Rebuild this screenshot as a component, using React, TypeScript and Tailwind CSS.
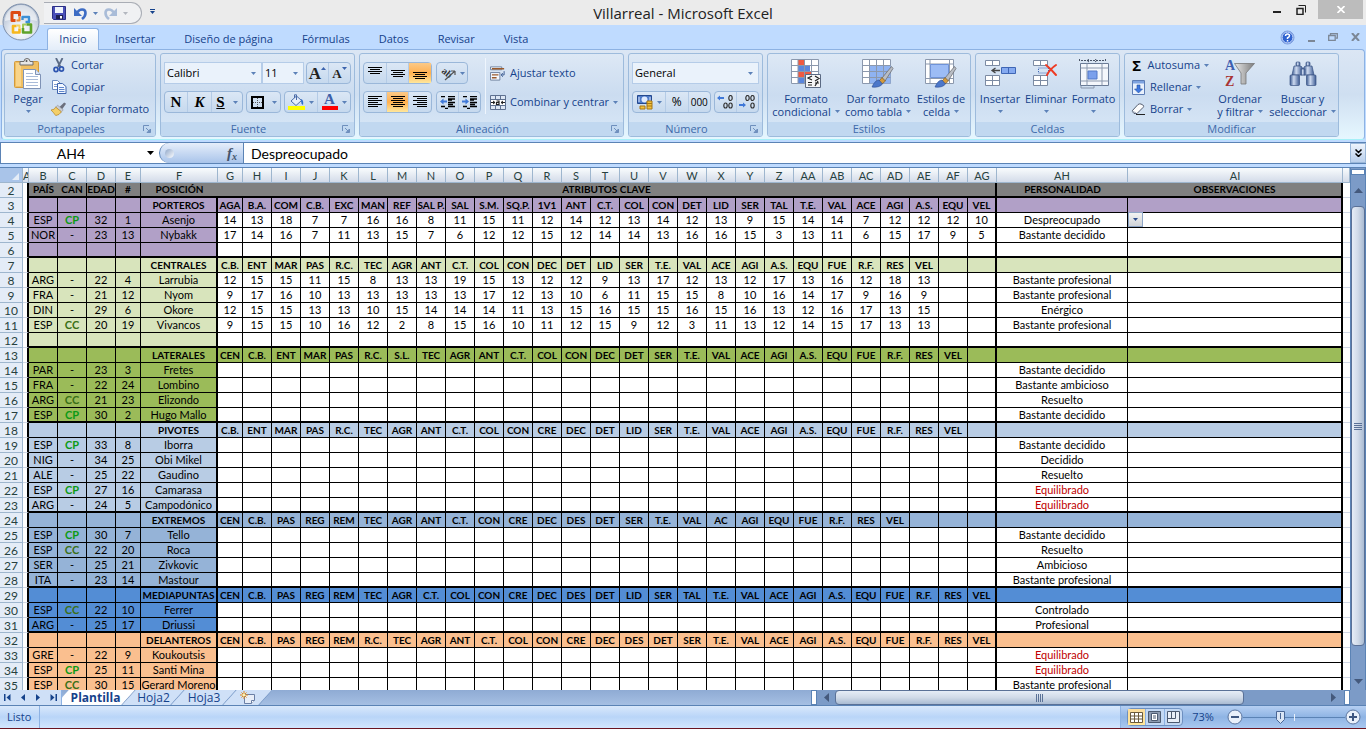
import type { ReactNode } from "react";

type Player = {
  country: string;
  can: string;
  age: number;
  num: number;
  name: string;
  stats?: string;
  personality?: string;
};

type Section = {
  title: string;
  color: string;
  attrs: string;
  players: Player[];
  spacer?: boolean;
};

const sections: Section[] = [
  {
    title: "PORTEROS",
    color: "bg-[#b1a0c7]",
    attrs: "AGA,B.A.,COM,C.B.,EXC,MAN,REF,SAL P.,SAL,S.M.,SQ.P.,1V1,ANT,C.T.,COL,CON,DET,LID,SER,TAL,T.E.,VAL,ACE,AGI,A.S.,EQU,VEL",
    spacer: true,
    players: [
      { country: "ESP", can: "CP", age: 32, num: 1, name: "Asenjo", personality: "Despreocupado", stats: "14,13,18,7,7,16,16,8,11,15,11,12,14,12,13,14,12,13,9,15,14,14,7,12,12,12,10" },
      { country: "NOR", can: "-", age: 23, num: 13, name: "Nybakk", personality: "Bastante decidido", stats: "17,14,16,7,11,13,15,7,6,12,12,15,12,14,14,13,16,16,15,3,13,11,6,15,17,9,5" },
    ],
  },
  {
    title: "CENTRALES",
    color: "bg-[#d8e4bc]",
    attrs: "C.B.,ENT,MAR,PAS,R.C.,TEC,AGR,ANT,C.T.,COL,CON,DEC,DET,LID,SER,T.E.,VAL,ACE,AGI,A.S.,EQU,FUE,R.F.,RES,VEL",
    spacer: true,
    players: [
      { country: "ARG", can: "-", age: 22, num: 4, name: "Larrubia", personality: "Bastante profesional", stats: "12,15,15,11,15,8,13,13,19,15,13,12,12,9,13,17,12,13,12,17,13,16,12,18,13" },
      { country: "FRA", can: "-", age: 21, num: 12, name: "Nyom", personality: "Bastante profesional", stats: "9,17,16,10,13,13,13,13,13,17,12,13,10,6,11,15,15,8,10,16,14,17,9,16,9" },
      { country: "DIN", can: "-", age: 29, num: 6, name: "Okore", personality: "Enérgico", stats: "12,15,15,13,13,10,15,14,14,14,11,13,15,16,15,15,16,15,16,13,12,16,17,13,15" },
      { country: "ESP", can: "CC", age: 20, num: 19, name: "Vivancos", personality: "Bastante profesional", stats: "9,15,15,10,16,12,2,8,15,16,10,11,12,15,9,12,3,11,13,12,14,15,17,13,13" },
    ],
  },
  {
    title: "LATERALES",
    color: "bg-[#9bbb59]",
    attrs: "CEN,C.B.,ENT,MAR,PAS,R.C.,S.L.,TEC,AGR,ANT,C.T.,COL,CON,DEC,DET,SER,T.E.,VAL,ACE,AGI,A.S.,EQU,FUE,R.F.,RES,VEL",
    players: [
      { country: "PAR", can: "-", age: 23, num: 3, name: "Fretes", personality: "Bastante decidido" },
      { country: "FRA", can: "-", age: 22, num: 24, name: "Lombino", personality: "Bastante ambicioso" },
      { country: "ARG", can: "CC", age: 21, num: 23, name: "Elizondo", personality: "Resuelto" },
      { country: "ESP", can: "CP", age: 30, num: 2, name: "Hugo Mallo", personality: "Bastante decidido" },
    ],
  },
  {
    title: "PIVOTES",
    color: "bg-[#b8cce4]",
    attrs: "C.B.,ENT,MAR,PAS,R.C.,TEC,AGR,ANT,C.T.,COL,CON,CRE,DEC,DET,LID,SER,T.E.,VAL,ACE,AGI,A.S.,EQU,FUE,R.F.,RES,VEL",
    players: [
      { country: "ESP", can: "CP", age: 33, num: 8, name: "Iborra", personality: "Bastante decidido" },
      { country: "NIG", can: "-", age: 34, num: 25, name: "Obi Mikel", personality: "Decidido" },
      { country: "ALE", can: "-", age: 25, num: 22, name: "Gaudino", personality: "Resuelto" },
      { country: "ESP", can: "CP", age: 27, num: 16, name: "Camarasa", personality: "Equilibrado" },
      { country: "ARG", can: "-", age: 24, num: 5, name: "Campodónico", personality: "Equilibrado" },
    ],
  },
  {
    title: "EXTREMOS",
    color: "bg-[#95b3d7]",
    attrs: "CEN,C.B.,PAS,REG,REM,TEC,AGR,ANT,C.T.,CON,CRE,DEC,DES,DET,SER,T.E.,VAL,AC,AGI,EQU,FUE,R.F.,RES,VEL",
    players: [
      { country: "ESP", can: "CP", age: 30, num: 7, name: "Tello", personality: "Bastante decidido" },
      { country: "ESP", can: "CC", age: 22, num: 20, name: "Roca", personality: "Resuelto" },
      { country: "SER", can: "-", age: 25, num: 21, name: "Zivkovic", personality: "Ambicioso" },
      { country: "ITA", can: "-", age: 23, num: 14, name: "Mastour", personality: "Bastante profesional" },
    ],
  },
  {
    title: "MEDIAPUNTAS",
    color: "bg-[#538dd5]",
    attrs: "CEN,C.B.,PAS,REG,REM,TEC,AGR,C.T.,COL,CON,CRE,DEC,DES,DET,LID,SER,TAL,T.E.,VAL,ACE,AGI,A.S.,EQU,FUE,R.F.,RES,VEL",
    players: [
      { country: "ESP", can: "CC", age: 22, num: 10, name: "Ferrer", personality: "Controlado" },
      { country: "ARG", can: "-", age: 25, num: 17, name: "Driussi", personality: "Profesional" },
    ],
  },
  {
    title: "DELANTEROS",
    color: "bg-[#fabf8f]",
    attrs: "CEN,C.B.,PAS,REG,REM,R.C.,TEC,AGR,ANT,C.T.,COL,CON,CRE,DEC,DES,DET,SER,T.E.,VAL,ACE,AGI,A.S.,EQU,FUE,R.F.,RES,VEL",
    players: [
      { country: "GRE", can: "-", age: 22, num: 9, name: "Koukoutsis", personality: "Equilibrado" },
      { country: "ESP", can: "CP", age: 25, num: 11, name: "Santi Mina", personality: "Equilibrado" },
      { country: "ESP", can: "CC", age: 30, num: 15, name: "Gerard Moreno", personality: "Bastante profesional" },
    ],
  },
];

type Row = {
  color: string;
  kind: "head" | "player" | "spacer";
  last: boolean;
  section?: Section;
  player?: Player;
};

const rows: Row[] = sections.flatMap((section) => {
  const { color } = section;
  const list: Row[] = [
    { color, kind: "head", last: false, section },
    ...section.players.map((player) => ({ color, kind: "player" as const, last: false, player })),
  ];
  if (section.spacer) list.push({ color, kind: "spacer", last: false });
  if (section.title !== "DELANTEROS") list[list.length - 1].last = true;
  return list;
});

const columns = "A B C D E F G H I J K L M N O P Q R S T U V W X Y Z AA AB AC AD AE AF AG AH AI".split(" ");
const ATTR_COUNT = 27;

const canColor: Record<string, string> = {
  CP: "font-bold text-[#0c9a14]",
  CC: "font-bold text-[#3a6f16]",
};

/* ---------- icons ---------- */

const Caret = ({ className = "text-[#5c81b8]" }: { className?: string }) => (
  <svg width="5" height="3" viewBox="0 0 5 3" className={`shrink-0 ${className}`} aria-hidden="true">
    <path d="M0 0h5L2.500 3z" fill="currentColor" />
  </svg>
);

const OfficeLogo = () => (
  <svg width="38" height="38" viewBox="0 0 38 38" aria-hidden="true">
    <defs>
      <radialGradient id="orb" cx="50%" cy="75%" r="70%">
        <stop offset="0" stopColor="#ffffff" />
        <stop offset="0.5" stopColor="#dfe5ee" />
        <stop offset="1" stopColor="#a9b7cc" />
      </radialGradient>
    </defs>
    <circle cx="19" cy="19" r="18" fill="url(#orb)" stroke="#7d8fab" />
    <path d="M3 18a16 16 0 0 1 32 0q-16-5-32 0z" fill="#fff" opacity="0.55" />
    <g fill="none" strokeLinejoin="round">
      <path d="M17.500 13.500V9.500h-7.500v8h3.500" stroke="#dd4a14" strokeWidth="3" />
      <path d="M14.500 17.500h3V14" stroke="#f08a2c" strokeWidth="2" />
      <path d="M20.500 17v-3h6.500v5h-3.500" stroke="#3c8fd6" strokeWidth="2.400" />
      <path d="M17.500 25.500v4H11v-6.500h3.500" stroke="#f6b71c" strokeWidth="2.600" />
      <path d="M14.500 22.500h3v3" stroke="#f3d05c" strokeWidth="2" />
      <path d="M21 25v4.500h8v-8h-4.500" stroke="#5fa32a" strokeWidth="2.600" />
      <path d="M21 25v-3.500h3.500" stroke="#a5cc5a" strokeWidth="2" />
    </g>
  </svg>
);

const SaveIcon = () => (
  <svg width="14" height="14" viewBox="0 0 14 14" aria-hidden="true">
    <path d="M.5.5h13v13h-12l-1-1z" fill="#4a4fb8" stroke="#2b2f86" />
    <path d="M3 1h8v6H3z" fill="#eef3fb" />
    <path d="M4 9h7v4H4z" fill="#1e2050" />
    <path d="M8 10h2v2.500H8z" fill="#fff" />
  </svg>
);

const UndoIcon = ({ flip = false }: { flip?: boolean }) => (
  <svg width="13" height="13" viewBox="0 0 13 13" className={flip ? "-scale-x-100" : ""} aria-hidden="true">
    <path d="M3.500 5.500c2-4 8-4 8 .5 0 3-1.500 4.500-3.500 6" fill="none" stroke={flip ? "#a9bcd8" : "#3d6cc4"} strokeWidth="2.600" />
    <path d="M0 1v8h8z" fill={flip ? "#a9bcd8" : "#3d6cc4"} />
  </svg>
);

const PasteIcon = () => (
  <svg width="28" height="31" viewBox="0 0 28 31" aria-hidden="true">
    <rect x=".5" y="3.500" width="24" height="26" rx="1" fill="#f0bf62" stroke="#d29a3c" />
    <path d="M2 5h5v23H2z" fill="#f8d48a" />
    <path d="M6 3.500h4q0-3 3-3t3 3h3V7H6z" fill="#e6e6e6" stroke="#6c6c6c" />
    <circle cx="12.500" cy="3" r="1" fill="#555" />
    <path d="M9.500 11.500h12l5 5v14h-17z" fill="#fff" stroke="#7f93b6" />
    <path d="M21.500 11.500v5h5" fill="#dbe5f4" stroke="#7f93b6" />
    <path d="M12 15.500h7M12 18.500h12M12 21.500h12M12 24.500h12M12 27.500h12" stroke="#a9bbd8" />
  </svg>
);

const CutIcon = () => (
  <svg width="15" height="15" viewBox="0 0 15 15" aria-hidden="true">
    <path d="M4 0l4.500 9M10.500 0L6 9" stroke="#5b6b86" strokeWidth="1.800" />
    <ellipse cx="4" cy="11.500" rx="2" ry="2.200" fill="none" stroke="#2f56b0" strokeWidth="1.700" />
    <ellipse cx="9.500" cy="11" rx="2" ry="2.200" fill="none" stroke="#2f56b0" strokeWidth="1.700" />
  </svg>
);

const CopyIcon = () => (
  <svg width="16" height="14" viewBox="0 0 16 14" aria-hidden="true">
    <path d="M1.500.5h5l3 3v6h-8z" fill="#fff" stroke="#6b8ac0" />
    <path d="M3 4.500h4M3 6.500h4" stroke="#7e9ace" />
    <path d="M6.500 3.500h5l3.500 3v7H6.500z" fill="#f3f8ff" stroke="#3d64ae" />
    <path d="M8 7.500h5M8 9.500h5.500M8 11.500h5.500" stroke="#5f86cc" />
  </svg>
);

const BrushIcon = () => (
  <svg width="17" height="14" viewBox="0 0 17 14" aria-hidden="true">
    <path d="M9 5l5-5 2 1.500L12 7z" fill="#6b6f7c" />
    <path d="M7 3l6 5-2 2-6-5z" fill="#c9ccd3" stroke="#8a8c94" strokeWidth=".6" />
    <path d="M5 5l6 5q-2 3.500-6 4Q3 11 0 8q4 0 5-3z" fill="#f4cf68" stroke="#b98a2a" strokeWidth=".8" />
  </svg>
);

const BordersIcon = () => (
  <svg width="13" height="13" viewBox="0 0 13 13" aria-hidden="true">
    <rect x="1" y="1" width="11" height="11" fill="none" stroke="#000" strokeWidth="2" />
    <path d="M6.500 2v9M2 6.500h9" stroke="#555" strokeDasharray="1 1" />
  </svg>
);

const FillIcon = () => (
  <svg width="17" height="16" viewBox="0 0 17 16" aria-hidden="true">
    <path d="M3 7l5.500-5 5 4.500L8 11.500z" fill="#e6eefb" stroke="#4b6ca8" />
    <path d="M8.500 6V.8H6.500V4" fill="none" stroke="#4b6ca8" />
    <path d="M13 5q3 1 2 6-2-1-2-4z" fill="#2f6fd0" />
    <path d="M0 12h17v4H0z" fill="#ffff00" />
  </svg>
);

const FontColorIcon = () => (
  <span className="flex w-4 flex-col items-center">
    <span className="font-['Liberation_Serif',serif] text-[15px] leading-[11px] font-bold text-[#3c5fa8]">A</span>
    <span className="mt-px h-1 w-4 bg-[#ff0000]" />
  </span>
);

type LinesProps = { rows: [number, number, number][]; height?: number };

const LinesIcon = ({ rows: lines, height = 12 }: LinesProps) => (
  <svg width="16" height={height} viewBox={`0 0 16 ${height}`} shapeRendering="crispEdges" aria-hidden="true">
    {lines.map(([x, y, w]) => (
      <rect key={y} x={x} y={y} width={w} height="1" fill="#000" />
    ))}
  </svg>
);

const IndentIcon = ({ flip = false }: { flip?: boolean }) => (
  <svg width="16" height="13" viewBox="0 0 16 13" aria-hidden="true">
    <path d="M1 .5h4M8 .5h7M8 3h7M8 4h4M8 6.500h7M8 8.500h5M1 10.500h4M8 10.500h7M5 12.500h3" stroke="#000" strokeWidth="1.300" />
    <path d={flip ? "M7 5.500L3.500 2.500v2H0v2h3.500v2z" : "M0 5.500l3.500-3v2H7v2H3.500v2z"} fill="#3f78d8" />
  </svg>
);

const OrientationIcon = () => (
  <svg width="16" height="16" viewBox="0 0 16 16" className="overflow-visible" aria-hidden="true">
    <text x="1" y="7" transform="rotate(40 1 7)" fontFamily="Liberation Serif, serif" fontSize="10" fontWeight="bold" fill="#333">
      ab
    </text>
    <path d="M5 15L15 6M15 6h-4M15 6v4" fill="none" stroke="#555" strokeWidth="1.200" />
  </svg>
);

const WrapIcon = () => (
  <svg width="17" height="15" viewBox="0 0 17 15" aria-hidden="true">
    <path d="M.5.500h12v3H.5z" fill="#fff" stroke="#6d7f9c" />
    <path d="M2 2.500h13" stroke="#9a5a2c" strokeWidth="1.500" />
    <path d="M.5 6.500h10v8H.5z" fill="#f5f9ff" stroke="#6d7f9c" />
    <path d="M2 9h7M2 12h5" stroke="#9a5a2c" strokeWidth="1.500" />
    <path d="M15 5v4h-3M13.500 7L12 9l1.500 2" fill="none" stroke="#39598f" />
  </svg>
);

const MergeIcon = () => (
  <svg width="16" height="15" viewBox="0 0 16 15" aria-hidden="true">
    <path d="M.5.500h15v14H.5z" fill="#dde7f5" stroke="#5e7191" />
    <path d="M5.500.500v4M10.500.500v4M5.500 10.500v4M10.500 10.500v4M.5 4.500h15M.5 10.500h15" stroke="#5e7191" />
    <path d="M1 5h14v5H1z" fill="#fff" />
    <path d="M1 7.500h4M15 7.500h-4M3 6l2 1.500L3 9M13 6l-2 1.500 2 1.500" fill="none" stroke="#222" />
    <path d="M6.500 6h2.500v3.500H6.500V7.500H9" fill="none" stroke="#222" strokeWidth="1.200" />
  </svg>
);

const CurrencyIcon = () => (
  <svg width="16" height="15" viewBox="0 0 16 15" aria-hidden="true">
    <path d="M.5.500h14v8H.5z" fill="#4f7bc8" stroke="#24488e" />
    <ellipse cx="7.500" cy="4.500" rx="3" ry="3" fill="#dfeaff" />
    <path d="M2 2v5M13 2v5" stroke="#dfeaff" />
    <path d="M10 6h5v8h-5z" fill="#f2c23c" stroke="#a87712" />
    <path d="M10 8.500h5M10 11h5" stroke="#a87712" />
    <path d="M3 11h5v3H3z" fill="#f2c23c" stroke="#a87712" />
  </svg>
);

const DecimalIcon = ({ less = false }: { less?: boolean }) => (
  <svg width="17" height="14" viewBox="0 0 17 14" aria-hidden="true">
    <path d={less ? "M7 10L4 7.500v1.500H0v2h4v1.500z" : "M0 3l3-2.500V2h4v2H3v1.500z"} fill="#3f78d8" />
    <g fill="none" stroke="#333" strokeWidth="1.200">
      <ellipse cx="13.500" cy="3" rx="1.700" ry="2.500" />
      {less ? <ellipse cx="8.500" cy="3" rx="1.700" ry="2.500" /> : <ellipse cx="8.500" cy="10.500" rx="1.700" ry="2.500" />}
      <ellipse cx="13.500" cy="10.500" rx="1.700" ry="2.500" />
    </g>
  </svg>
);

const CondFormatIcon = () => (
  <svg width="31" height="30" viewBox="0 0 31 30" aria-hidden="true">
    <path d="M.5.500h27v24H.5z" fill="#fff" stroke="#8b98ad" />
    <path d="M7 1h6v5H7zM7 13h13v5H7z" fill="#ef5a41" />
    <path d="M7 7h12v5H7zM7 19h6v5H7z" fill="#5a86dd" />
    <path d="M7 .5v24M13.500.500v24M20.500.500v24M.5 6.500h27M.5 12.500h27M.5 18.500h27" stroke="#8b98ad" />
    <path d="M14.500 15.500h15v13h-15z" fill="#f6f6f6" stroke="#5b6a83" />
    <path d="M21 17l-4 2 4 2M17 23.500h4M17 26h4M24 17l4 2.500-4 2.500M24 24h4M27 22l-3 5" fill="none" stroke="#222" strokeWidth="1.200" />
  </svg>
);

const PaintBrush = () => (
  <g>
    <path d="M29.500 7.500L20 19l3 3 8-12.500z" fill="#b9bdc4" stroke="#6c6f76" strokeWidth=".8" />
    <path d="M20 18.500l-3 3.500 3 3 3.500-3z" fill="#d49a3c" stroke="#6b5022" strokeWidth=".6" />
    <path d="M17 21q-4 0-7 7 7 1 10.500-3z" fill="#4c77c9" stroke="#2c4e93" strokeWidth=".6" />
  </g>
);

const TableFormatIcon = () => (
  <svg width="32" height="30" viewBox="0 0 32 30" aria-hidden="true">
    <path d="M.5.500h28v24H.5z" fill="#fff" stroke="#8b98ad" />
    <path d="M7.500 6.500h21v18h-21z" fill="#8fb3f2" />
    <path d="M7.500.500v24M14.500.500v24M21.500.500v24M.5 6.500h28M.5 12.500h28M.5 18.500h28" stroke="#8b98ad" />
    <PaintBrush />
  </svg>
);

const CellStyleIcon = () => (
  <svg width="32" height="30" viewBox="0 0 32 30" aria-hidden="true">
    <path d="M.5.500h28v24H.5z" fill="#fff" stroke="#8b98ad" />
    <path d="M5 .500v24M24.500.500v24M.5 5h28M.5 19.500h28" stroke="#8b98ad" />
    <path d="M5.500 5.500h18v13h-18z" fill="#9cbcf5" stroke="#6f93d8" />
    <PaintBrush />
  </svg>
);

const InsertCellsIcon = () => (
  <svg width="31" height="29" viewBox="0 0 31 29" aria-hidden="true">
    <path d="M.5 1.500h14v5H.5zM.5 16.500h14v10H.5z" fill="#fff" stroke="#7c8ba3" />
    <path d="M7.500 1.500v5M7.500 16.500v10M.5 21.500h14" stroke="#7c8ba3" />
    <path d="M16.500 8.500h14v6h-14z" fill="#85aaf0" stroke="#3f66b5" />
    <path d="M23.500 8.500v6" stroke="#3f66b5" />
    <path d="M15 11.500H8M10.500 9L7 11.500l3.500 2.500" fill="none" stroke="#444" strokeWidth="1.300" />
  </svg>
);

const DeleteCellsIcon = () => (
  <svg width="26" height="29" viewBox="0 0 26 29" aria-hidden="true">
    <path d="M.5 1.500h14v5H.5zM.5 16.500h14v10H.5z" fill="#fff" stroke="#7c8ba3" />
    <path d="M7.500 1.500v5M7.500 16.500v10M.5 21.500h14" stroke="#7c8ba3" />
    <path d="M5.500 9h10v5h-10z" fill="none" stroke="#3f66b5" strokeDasharray="1 1" />
    <path d="M13 6q5 4 10 10M23 6q-6 4-9 10" fill="none" stroke="#ee3b24" strokeWidth="2" strokeLinecap="round" />
  </svg>
);

const FormatCellsIcon = () => (
  <svg width="32" height="30" viewBox="0 0 32 30" aria-hidden="true">
    <path d="M1.500 0v3M27.500 0v3M3 1.500h23M11 0L9 1.500 11 3M17 0l2 1.500L17 3" fill="none" stroke="#4a5568" strokeDasharray="2 1" />
    <path d="M2.500 4.500h28v22h-28z" fill="#f4f7fc" stroke="#6a7b96" />
    <path d="M9 4.500v22M24 4.500v22M2.500 9h28M2.500 22h28" stroke="#8b98ad" />
    <path d="M10 12h9v8h-9z" fill="#7ba0ec" stroke="#5379c8" />
    <path d="M3 27v2h13v-2" fill="none" stroke="#8b98ad" />
  </svg>
);

const FillDownIcon = () => (
  <svg width="13" height="15" viewBox="0 0 13 15" aria-hidden="true">
    <path d="M.5.500h12v14H.5z" fill="#e9f1fd" stroke="#5d7db5" />
    <path d="M1 1h11v2.500H1z" fill="#7ea3e0" />
    <path d="M5 5h3v4h2.500l-4 4-4-4H5z" fill="#3f78e0" stroke="#22509f" strokeWidth=".6" />
  </svg>
);

const EraserIcon = () => (
  <svg width="14" height="12" viewBox="0 0 14 12" aria-hidden="true">
    <path d="M1 8l6-6.500Q8.500.5 10 1l2.500 1.500q.5 1-.5 2L6 10.500H3z" fill="#fdfdfd" stroke="#555e70" />
    <path d="M1 8l4 2" stroke="#9aa5b8" />
    <path d="M5 11.500h9" stroke="#222" />
  </svg>
);

const SortFilterIcon = () => (
  <span className="relative flex h-[31px] w-[30px] flex-col items-start font-['Liberation_Serif',serif] text-[14px] leading-[16px] font-bold" aria-hidden="true">
    <span className="text-[#3f60b0]">A</span>
    <span className="text-[#a83434]">Z</span>
    <svg width="21" height="22" viewBox="0 0 21 22" className="absolute top-[5px] right-0">
      <defs>
        <linearGradient id="funnel" x1="0" x2="1">
          <stop offset="0" stopColor="#e8e8e8" />
          <stop offset="1" stopColor="#7b7b7b" />
        </linearGradient>
      </defs>
      <path d="M.5.500h20L12 10v11H7V10z" fill="url(#funnel)" stroke="#777" strokeWidth=".8" />
    </svg>
  </span>
);

const BinocularsIcon = () => (
  <svg width="28" height="26" viewBox="0 0 28 26" aria-hidden="true">
    <defs>
      <linearGradient id="barrel" x1="0" x2="1">
        <stop offset="0" stopColor="#39588f" />
        <stop offset="0.4" stopColor="#cddaf0" />
        <stop offset="1" stopColor="#3c5a92" />
      </linearGradient>
    </defs>
    <g fill="url(#barrel)" stroke="#3a5384" strokeWidth=".7">
      <rect x="7" y="1" width="4" height="4" rx="1" />
      <rect x="17" y="1" width="4" height="4" rx="1" />
      <path d="M5 5h7l1.500 2v7H3z" />
      <path d="M16 5h7l2 9H14.500V7z" />
      <rect x="12" y="8" width="4" height="6" />
      <rect x="1" y="14" width="9.500" height="10.500" rx="1" />
      <rect x="17.500" y="14" width="9.500" height="10.500" rx="1" />
    </g>
  </svg>
);

const NewSheetIcon = () => (
  <svg width="16" height="13" viewBox="0 0 16 13" aria-hidden="true">
    <path d="M4.500 3.500h10v6l-3 3h-7z" fill="#e8eef8" stroke="#6a7fa5" />
    <path d="M11.500 12.500v-3h3" fill="#fff" stroke="#6a7fa5" />
    <path d="M4 0v8M0 4h8M1.500 1.500l5 5M6.500 1.500l-5 5" stroke="#e08a1c" />
    <circle cx="4" cy="4" r="1.300" fill="#fff6b0" />
  </svg>
);

/* ---------- ribbon ---------- */

type GroupProps = { label: string; width: string; launcher?: boolean; children: ReactNode };

const Group = ({ label, width, launcher, children }: GroupProps) => (
  <section
    aria-label={label}
    className={`flex h-[84px] shrink-0 flex-col overflow-hidden rounded-[3px] border border-[#9dbbdc] bg-linear-to-b from-[#dde8f5] via-[#cbdcf0] to-[#d9e8f7] ${width}`}
  >
    <div className="flex flex-1">{children}</div>
    <div className="flex h-[14px] items-center justify-center bg-[#c1d8f0] text-[#3e6aaa]">
      <span className={launcher ? "flex-1 pr-[6px] text-center" : ""}>{label}</span>
      {launcher && (
        <button aria-label={`Opciones de ${label}`} className="mr-1">
          <svg width="8" height="8" viewBox="0 0 8 8" aria-hidden="true">
            <path d="M.5 6V.500H6" fill="none" stroke="#6e8fbd" />
            <path d="M3 3l3 3M7.500 4v3.500H4z" stroke="#6e8fbd" fill="#6e8fbd" />
          </svg>
        </button>
      )}
    </div>
  </section>
);

const ButtonBox = ({ children, className = "" }: { children: ReactNode; className?: string }) => (
  <div className={`flex h-[22px] items-stretch divide-x divide-[#b4cbe6] rounded-sm border border-[#9ab7d9] bg-linear-to-b from-[#dbe7f5] to-[#c6d9ee] ${className}`}>
    {children}
  </div>
);

type BoxButtonProps = { label: string; active?: boolean; className?: string; children: ReactNode };

const BoxButton = ({ label, active, className = "flex-1", children }: BoxButtonProps) => (
  <button
    aria-label={label}
    className={`flex items-center justify-center gap-1 ${active ? "bg-linear-to-b from-[#fbc987] via-[#ffb04e] to-[#ffe79b]" : ""} ${className}`}
  >
    {children}
  </button>
);

type SmallButtonProps = { icon: ReactNode; label: string; caret?: boolean };

const SmallButton = ({ icon, label, caret }: SmallButtonProps) => (
  <button className="flex h-[22px] items-center gap-1">
    <span className="flex w-4 justify-center">{icon}</span>
    <span>{label}</span>
    {caret && <Caret />}
  </button>
);

type LargeButtonProps = { icon: ReactNode; lines: string[]; className?: string };

const LargeButton = ({ icon, lines, className = "" }: LargeButtonProps) => (
  <button className={`flex flex-col items-center pt-1 leading-[13px] whitespace-nowrap ${className}`}>
    <span className="mb-[3px] flex h-[31px] items-center">{icon}</span>
    <span>{lines[0]}</span>
    <span className="flex h-[13px] items-center gap-1">
      {lines[1]}
      <Caret />
    </span>
  </button>
);

type ComboProps = { label: string; value: string; width: string };

const Combo = ({ label, value, width }: ComboProps) => (
  <label className={`flex h-[22px] items-center border border-[#b5cce8] bg-[#eaf2fb] pr-[5px] ${width}`}>
    <select aria-label={label} defaultValue={value} className="min-w-0 flex-1 appearance-none bg-transparent pl-[2px] text-[11px] text-black outline-none">
      <option>{value}</option>
    </select>
    <Caret />
  </label>
);

const Ribbon = () => (
  <div className="mx-px flex h-[91px] gap-1 rounded-[4px] border border-[#8db2e3] border-b-[#a5f0f8] bg-linear-to-b from-[#dbe6f4] via-[#cfdff1] to-[#e6f7ff] px-[2px] pt-[3px] whitespace-nowrap text-[#15428b]">
    <Group label="Portapapeles" width="w-[152px]" launcher>
      <LargeButton icon={<PasteIcon />} lines={["Pegar"]} className="w-[46px]" />
      <div className="flex flex-col">
        <SmallButton icon={<CutIcon />} label="Cortar" />
        <SmallButton icon={<CopyIcon />} label="Copiar" />
        <SmallButton icon={<BrushIcon />} label="Copiar formato" />
      </div>
    </Group>

    <Group label="Fuente" width="w-[195px]" launcher>
      <div className="flex flex-1 flex-col gap-[7px] px-[3px] pt-2">
        <div className="flex">
          <Combo label="Fuente" value="Calibri" width="w-[98px]" />
          <Combo label="Tamaño" value="11" width="w-[42px]" />
          <ButtonBox className="ml-auto w-[45px]">
            <BoxButton label="Aumentar tamaño">
              <span className="font-['Liberation_Serif',serif] text-[17px] leading-none font-bold text-[#222]">A</span>
              <svg width="5" height="12" viewBox="0 0 5 12" className="-ml-1" aria-hidden="true"><path d="M0 3h5L2.500 0z" fill="#3b63ad" /></svg>
            </BoxButton>
            <BoxButton label="Disminuir tamaño">
              <span className="font-['Liberation_Serif',serif] text-[13px] leading-none font-bold text-[#222]">A</span>
              <svg width="5" height="12" viewBox="0 0 5 12" className="-ml-1" aria-hidden="true"><path d="M0 0h5L2.500 3z" fill="#3b63ad" /></svg>
            </BoxButton>
          </ButtonBox>
        </div>
        <div className="flex justify-between">
          <ButtonBox className="w-[79px] font-['Liberation_Serif',serif] text-[15px] font-bold text-black">
            <BoxButton label="Negrita" className="w-[23px]"><span className="font-black">N</span></BoxButton>
            <BoxButton label="Cursiva" className="w-6"><i>K</i></BoxButton>
            <BoxButton label="Subrayado"><u>S</u><Caret className="ml-1 text-[#5c81b8]" /></BoxButton>
          </ButtonBox>
          <ButtonBox className="w-[35px]">
            <BoxButton label="Bordes"><BordersIcon /><Caret className="ml-1 text-[#5c81b8]" /></BoxButton>
          </ButtonBox>
          <ButtonBox className="w-[67px]">
            <BoxButton label="Color de relleno"><FillIcon /><Caret /></BoxButton>
            <BoxButton label="Color de fuente"><FontColorIcon /><Caret /></BoxButton>
          </ButtonBox>
        </div>
      </div>
    </Group>

    <Group label="Alineación" width="w-[265px]" launcher>
      <div className="flex flex-col gap-[7px] pt-2 pl-[3px]">
        <div className="flex gap-1">
          <ButtonBox className="w-[69px]">
            <BoxButton label="Alinear arriba"><LinesIcon rows={[[1, 0, 14], [3, 2, 10], [1, 4, 14], [3, 6, 10]]} /></BoxButton>
            <BoxButton label="Alinear en el medio"><LinesIcon rows={[[1, 3, 14], [3, 5, 10], [1, 7, 14], [3, 9, 10]]} /></BoxButton>
            <BoxButton label="Alinear abajo" active><LinesIcon rows={[[1, 5, 14], [3, 7, 10], [1, 9, 14], [3, 11, 10]]} /></BoxButton>
          </ButtonBox>
          <ButtonBox className="w-8">
            <BoxButton label="Orientación"><OrientationIcon /><Caret /></BoxButton>
          </ButtonBox>
        </div>
        <div className="flex gap-1">
          <ButtonBox className="w-[69px]">
            <BoxButton label="Alinear a la izquierda"><LinesIcon rows={[[1, 0, 14], [1, 2, 10], [1, 4, 14], [1, 6, 10], [1, 8, 14], [1, 10, 10]]} /></BoxButton>
            <BoxButton label="Centrar" active><LinesIcon rows={[[1, 0, 14], [3, 2, 10], [1, 4, 14], [3, 6, 10], [1, 8, 14], [3, 10, 10]]} /></BoxButton>
            <BoxButton label="Alinear a la derecha"><LinesIcon rows={[[1, 0, 14], [5, 2, 10], [1, 4, 14], [5, 6, 10], [1, 8, 14], [5, 10, 10]]} /></BoxButton>
          </ButtonBox>
          <ButtonBox className="w-[45px]">
            <BoxButton label="Disminuir sangría"><IndentIcon /></BoxButton>
            <BoxButton label="Aumentar sangría"><IndentIcon flip /></BoxButton>
          </ButtonBox>
        </div>
      </div>
      <div className="mx-1 mt-1 mb-2 w-px bg-[#eef5fd]" />
      <div className="flex flex-col gap-[7px] pt-2">
        <SmallButton icon={<WrapIcon />} label="Ajustar texto" />
        <SmallButton icon={<MergeIcon />} label="Combinar y centrar" caret />
      </div>
    </Group>

    <Group label="Número" width="w-[135px]" launcher>
      <div className="flex flex-1 flex-col gap-[7px] px-[3px] pt-2">
        <Combo label="Formato de número" value="General" width="w-full" />
        <div className="flex justify-between">
          <ButtonBox className="w-[79px] text-black">
            <BoxButton label="Formato de moneda" className="w-[33px]"><CurrencyIcon /><Caret /></BoxButton>
            <BoxButton label="Estilo porcentual"><span className="text-[12px]">%</span></BoxButton>
            <BoxButton label="Estilo millares"><span className="text-[10px]">000</span></BoxButton>
          </ButtonBox>
          <ButtonBox className="w-[45px]">
            <BoxButton label="Aumentar decimales"><DecimalIcon /></BoxButton>
            <BoxButton label="Disminuir decimales"><DecimalIcon less /></BoxButton>
          </ButtonBox>
        </div>
      </div>
    </Group>

    <Group label="Estilos" width="w-[204px]">
      <LargeButton icon={<CondFormatIcon />} lines={["Formato", "condicional"]} className="w-[76px]" />
      <LargeButton icon={<TableFormatIcon />} lines={["Dar formato", "como tabla"]} className="w-[68px]" />
      <LargeButton icon={<CellStyleIcon />} lines={["Estilos de", "celda"]} className="flex-1" />
    </Group>

    <Group label="Celdas" width="w-[145px]">
      <LargeButton icon={<InsertCellsIcon />} lines={["Insertar"]} className="w-12" />
      <LargeButton icon={<DeleteCellsIcon />} lines={["Eliminar"]} className="w-11" />
      <LargeButton icon={<FormatCellsIcon />} lines={["Formato"]} className="flex-1" />
    </Group>

    <Group label="Modificar" width="w-[215px]">
      <div className="flex w-[84px] flex-col pl-[5px]">
        <SmallButton icon={<span className="text-[15px] font-bold text-black">Σ</span>} label="Autosuma" caret />
        <SmallButton icon={<FillDownIcon />} label="Rellenar" caret />
        <SmallButton icon={<EraserIcon />} label="Borrar" caret />
      </div>
      <LargeButton icon={<SortFilterIcon />} lines={["Ordenar", "y filtrar"]} className="ml-1 w-[54px]" />
      <LargeButton icon={<BinocularsIcon />} lines={["Buscar y", "seleccionar"]} className="flex-1" />
    </Group>
  </div>
);

/* ---------- window chrome ---------- */

const TitleBar = () => (
  <header className="relative flex h-[25px] shrink-0 items-start bg-[#ebebeb]">
    <div className="mt-[2px] ml-[44px] flex h-[22px] w-[98px] items-center gap-[6px] rounded-r-full border border-l-0 border-[#a9adb5] bg-[#f0f1f3] pl-2">
      <button aria-label="Guardar"><SaveIcon /></button>
      <button aria-label="Deshacer" className="ml-[2px] flex items-center gap-[6px]"><UndoIcon /><Caret /></button>
      <button aria-label="Rehacer" className="flex items-center gap-[6px]"><UndoIcon flip /><Caret className="text-[#b3b7bf]" /></button>
    </div>
    <button aria-label="Personalizar barra de acceso rápido" className="mt-[9px] ml-2 flex flex-col items-center gap-px">
      <span className="h-px w-[5px] bg-[#15428b]" />
      <Caret className="text-[#15428b]" />
    </button>
    <h1 className="pointer-events-none absolute inset-x-0 top-[3px] text-center text-[15px] leading-[20px] text-[#222]">Villarreal - Microsoft Excel</h1>
    <div className="ml-auto flex">
      <button aria-label="Minimizar" className="flex h-[19px] w-5 justify-center pt-[11px]"><span className="h-[2px] w-2 bg-[#222]" /></button>
      <button aria-label="Restaurar" className="flex h-[19px] w-7 items-center justify-center">
        <svg width="10" height="10" viewBox="0 0 10 10" aria-hidden="true">
          <path d="M1 3.500h6v6H1z" fill="none" stroke="#222" strokeWidth="1.500" />
          <path d="M2.500.500h7v7" fill="none" stroke="#222" />
        </svg>
      </button>
      <button aria-label="Cerrar" className="mr-[3px] ml-[3px] flex h-[19px] w-[45px] items-center justify-center bg-[#bcbcbc]">
        <svg width="8" height="7" viewBox="0 0 8 7" aria-hidden="true"><path d="M.5 0l7 7M7.500 0l-7 7" stroke="#fff" strokeWidth="1.700" /></svg>
      </button>
    </div>
  </header>
);

const tabs = ["Insertar", "Diseño de página", "Fórmulas", "Datos", "Revisar", "Vista"];

const RibbonTabs = () => (
  <nav className="flex h-[24px] shrink-0 items-stretch pl-[47px] text-[11px] text-[#15428b]">
    <button className="relative z-10 mt-[3px] -mb-px w-[52px] rounded-t-[3px] border border-b-0 border-[#8db2e3] bg-linear-to-b from-white to-[#e3edf9]">Inicio</button>
    <div className="flex gap-[29px] pt-1 pl-4">
      {tabs.map((tab) => (
        <button key={tab}>{tab}</button>
      ))}
    </div>
    <div className="ml-auto flex items-center gap-[13px] pr-[6px]">
      <button aria-label="Ayuda">
        <svg width="15" height="15" viewBox="0 0 15 15" aria-hidden="true">
          <circle cx="7.500" cy="7.500" r="6.500" fill="#2f62cf" stroke="#7d9ede" />
          <circle cx="7.500" cy="7.500" r="5.500" fill="none" stroke="#dbe8ff" />
          <path d="M5.500 6q0-2 2-2t2 1.800q0 1-2 2.200v1" fill="none" stroke="#fff" strokeWidth="1.500" />
          <path d="M6.800 10h1.500v1.500H6.800z" fill="#fff" />
        </svg>
      </button>
      <button aria-label="Minimizar libro" className="h-3 pt-2"><span className="block h-[2px] w-[7px] bg-[#7c8796]" /></button>
      <button aria-label="Restaurar libro">
        <svg width="10" height="8" viewBox="0 0 10 8" aria-hidden="true">
          <path d="M.7 2.500h6.500v5H.7z M2.500 2V.7h6.800v4.500H8" fill="none" stroke="#7c8796" strokeWidth="1.300" />
        </svg>
      </button>
      <button aria-label="Cerrar libro">
        <svg width="9" height="8" viewBox="0 0 9 8" aria-hidden="true"><path d="M1 0l7 8M8 0L1 8" stroke="#7c8796" strokeWidth="2" /></svg>
      </button>
    </div>
  </nav>
);

const FormulaBar = () => (
  <div className="mt-[2px] flex h-[22px] shrink-0 border-y border-[#5b83b5] bg-white font-['Lato','Open_Sans',sans-serif] text-[14px] text-black">
    <input aria-label="Cuadro de nombres" defaultValue="AH4" className="w-[141px] min-w-0 border-l border-[#5b83b5] text-center outline-none" />
    <button aria-label="Lista de nombres" className="flex w-[18px] items-center justify-center">
      <svg width="7" height="4" viewBox="0 0 7 4" aria-hidden="true"><path d="M0 0h7L3.500 4z" fill="#000" /></svg>
    </button>
    <div className="flex w-[85px] items-center justify-between rounded-l-full border-x border-[#5b83b5] bg-linear-to-b from-[#e6eefa] to-[#a9c4ea] pr-[6px] pl-[5px]">
      <span className="size-[9px] rounded-full bg-linear-to-br from-[#8fa6c8] to-white" />
      <button aria-label="Insertar función" className="font-['Liberation_Serif',serif] text-[15px] leading-none font-bold text-[#44546c] italic">
        f<sub className="text-[10px]">x</sub>
      </button>
    </div>
    <input aria-label="Barra de fórmulas" defaultValue="Despreocupado" className="min-w-0 flex-1 pl-[7px] outline-none" />
    <button aria-label="Expandir barra de fórmulas" className="flex w-4 items-center justify-center border border-[#9ab7d9] bg-linear-to-b from-[#eef4fc] to-[#b9cfec]">
      <svg width="7" height="8" viewBox="0 0 7 8" aria-hidden="true"><path d="M.5.500l3 3 3-3M.5 4.500l3 3 3-3" fill="none" stroke="#000" strokeWidth="1.500" /></svg>
    </button>
  </div>
);

/* ---------- sheet ---------- */

const thin = "border-r border-black";
const thick = "border-r-2 border-black";

const SheetRow = ({ row, index }: { row: Row; index: number }) => {
  const { color, player, section } = row;
  const isHead = row.kind === "head";
  const bottom = row.last ? "border-b-2" : "border-b";
  const stats = (section?.attrs ?? player?.stats ?? "").split(",");
  const fill = isHead ? color : "bg-white";
  return (
    <tr className={isHead ? "text-[10px] leading-[14px] font-bold" : ""}>
      <RowHeader n={index} />
      <td className="border-r-2 border-b border-r-black border-b-[#d0d7e5]" />
      <td className={`${thin} ${bottom} ${color}`}>{player?.country}</td>
      <td className={`${thin} ${bottom} ${color}`}>
        <span className={canColor[player?.can ?? ""]}>{player?.can}</span>
      </td>
      <td className={`${thin} ${bottom} ${color}`}>{player?.age}</td>
      <td className={`${thin} ${bottom} ${color}`}>{player?.num}</td>
      <td className={`${thick} ${bottom} ${color}`}>{player?.name ?? section?.title}</td>
      {Array.from({ length: ATTR_COUNT }, (_, i) => (
        <td key={i} className={`${i === ATTR_COUNT - 1 ? thick : thin} ${bottom} ${fill}`}>
          {stats[i]}
        </td>
      ))}
      <td className={`${thin} ${bottom} ${fill} ${player?.personality === "Equilibrado" ? "text-[#c00000]" : ""}`}>{player?.personality}</td>
      <td className={`relative ${thick} ${bottom} ${fill}`}>
        {player?.name === "Asenjo" && (
          <button aria-label="Lista desplegable" className="absolute -top-px left-0 flex h-[15px] w-[15px] items-center justify-center border border-[#8ea5c6] bg-linear-to-b from-[#f3f3f3] to-[#cfd3d8]">
            <Caret className="text-[#2a4a8c]" />
          </button>
        )}
      </td>
      <td className="border-b border-[#d0d7e5]" />
    </tr>
  );
};

const RowHeader = ({ n }: { n: number }) => (
  <th scope="row" className="border-r border-b border-[#9eb6ce] bg-[#e4ecf7] text-[12px] leading-[13px] font-normal text-[#27413e]">
    {n}
  </th>
);

const Sheet = () => (
  <div className="min-w-0 flex-1 overflow-hidden bg-white">
    <table className="w-full table-fixed border-separate border-spacing-0 text-center font-['Lato','Open_Sans',sans-serif] text-[11px] leading-[13px] whitespace-nowrap text-black [&_td]:h-[15px] [&_td]:p-0 [&_td]:align-top [&_th]:h-[15px] [&_th]:p-0">
      <colgroup>
        <col className="w-[23px]" />
        <col className="w-[6px]" />
        <col className="w-[29px]" />
        <col className="w-[29px]" />
        <col className="w-[29px]" />
        <col className="w-[25px]" />
        <col className="w-[77px]" />
        <col className="w-[25px]" />
        {Array.from({ length: 26 }, (_, i) => (
          <col key={i} className="w-[29px]" />
        ))}
        <col className="w-[131px]" />
        <col />
        <col className="w-[7px]" />
      </colgroup>
      <thead>
        <tr>
          <td className="border-r border-b border-[#9eb6ce] bg-[#a9c4e9]">
            <svg width="7" height="7" viewBox="0 0 7 7" className="mt-[5px] ml-3" aria-hidden="true"><path d="M7 0v7H0z" fill="#e4ecf7" /></svg>
          </td>
          {[...columns, ""].map((name) => (
            <th key={name} scope="col" className="overflow-hidden border-r border-b border-[#9eb6ce] bg-linear-to-b from-[#f9fcfd] to-[#d3dbe9] font-normal text-[#27413e]">
              {name}
            </th>
          ))}
        </tr>
      </thead>
      <tbody>
        <tr className="text-[10px] font-bold [&>td]:bg-[#808080]">
          <RowHeader n={2} />
          <td className="border-r-2 border-r-black bg-white!" />
          <td className="border-b-2 border-black">PAÍS</td>
          <td className={`border-b-2 ${thin}`}>CAN</td>
          <td className={`border-b-2 ${thin}`}>EDAD</td>
          <td className={`border-b-2 ${thin}`}>#</td>
          <td className="border-b-2 border-black">POSICIÓN</td>
          <td colSpan={ATTR_COUNT} className={`border-b-2 ${thick}`}>ATRIBUTOS CLAVE</td>
          <td className="border-b-2 border-black">PERSONALIDAD</td>
          <td className={`border-b-2 ${thick}`}>OBSERVACIONES</td>
          <td className="border-b border-[#d0d7e5] bg-white!" />
        </tr>
        {rows.map((row, i) => (
          <SheetRow key={i} row={row} index={i + 3} />
        ))}
      </tbody>
    </table>
  </div>
);

const VerticalScroll = () => (
  <div className="flex w-4 shrink-0 flex-col items-center border-x border-[#5b83b5] bg-[#7c9bc7]">
    <span className="mt-px h-[6px] w-full border border-[#5b83b5] bg-white" />
    <button aria-label="Subir" className="flex h-[31px] w-full items-center justify-center">
      <svg width="9" height="5" viewBox="0 0 9 5" aria-hidden="true"><path d="M0 5h9L4.500 0z" fill="#44597c" /></svg>
    </button>
    <div className="flex w-full flex-1 flex-col items-center justify-center gap-px rounded-sm border border-[#5a7197] bg-linear-to-r from-[#e6edf7] via-[#d0dae8] to-[#aabbd2]">
      {[0, 1, 2, 3].map((i) => (
        <span key={i} className="h-px w-2 bg-[#5a7197]" />
      ))}
    </div>
    <button aria-label="Bajar" className="flex h-11 w-full items-end justify-center pb-[6px]">
      <svg width="9" height="5" viewBox="0 0 9 5" aria-hidden="true"><path d="M0 0h9L4.500 5z" fill="#44597c" /></svg>
    </button>
  </div>
);

const NavIcon = ({ d }: { d: string }) => (
  <svg width="8" height="7" viewBox="0 0 8 7" aria-hidden="true">
    <path d={d} fill="#15428b" />
  </svg>
);

const tabShape = "relative isolate flex items-center justify-center before:absolute before:inset-0 before:-z-10 before:-skew-x-[42deg] before:border-r before:border-[#6d8fc0]";

const SheetTabs = () => (
  <div className="flex h-4 shrink-0 border-b border-[#5b83b5] bg-linear-to-b from-[#8fabd4] to-[#a5bfe3]">
    <div className="z-10 flex w-[62px] items-center justify-around border-r border-[#8db2e3] bg-[#cfe0f7] px-px">
      <button aria-label="Primera hoja"><NavIcon d="M0 0h1.500v7H0zM6.500 0v7L2.500 3.500z" /></button>
      <button aria-label="Hoja anterior"><NavIcon d="M6 0v7L2 3.500z" /></button>
      <button aria-label="Hoja siguiente"><NavIcon d="M2 0v7l4-3.500z" /></button>
      <button aria-label="Última hoja"><NavIcon d="M6.500 0H8v7H6.500zM1.500 0v7l4-3.500z" /></button>
    </div>
    <div className="flex overflow-hidden pr-2 text-[12px] leading-[14px] text-[#15428b]">
      <button className={`${tabShape} w-[67px] font-bold before:bg-white`}>Plantilla</button>
      <button className={`${tabShape} w-[49px] before:bg-[#cfe0f7]`}>Hoja2</button>
      <button className={`${tabShape} w-[52px] before:bg-[#cfe0f7]`}>Hoja3</button>
      <button aria-label="Insertar hoja de cálculo" className={`${tabShape} w-9 before:bg-[#cfe0f7]`}><NewSheetIcon /></button>
    </div>
    <div className="ml-auto flex w-[555px] items-stretch bg-[#7c9bc7]">
      <span className="w-[6px] border border-[#5b83b5] bg-white" />
      <button aria-label="Desplazar a la izquierda" className="flex w-[18px] items-center justify-center">
        <svg width="5" height="9" viewBox="0 0 5 9" aria-hidden="true"><path d="M5 0v9L0 4.500z" fill="#44597c" /></svg>
      </button>
      <div className="flex flex-1 items-center justify-center gap-px rounded-sm border border-[#5a7197] bg-linear-to-b from-[#e6edf7] via-[#d0dae8] to-[#aabbd2]">
        {[0, 1, 2, 3].map((i) => (
          <span key={i} className="h-2 w-px bg-[#5a7197]" />
        ))}
      </div>
      <button aria-label="Desplazar a la derecha" className="flex w-[100px] items-center justify-end pr-2">
        <svg width="5" height="9" viewBox="0 0 5 9" aria-hidden="true"><path d="M0 0v9l5-4.500z" fill="#44597c" /></svg>
      </button>
      <span className="w-[6px] border border-[#5b83b5] bg-white" />
      <span className="w-4" />
    </div>
  </div>
);

const StatusBar = () => (
  <footer className="flex h-[23px] shrink-0 items-stretch border-b border-[#6b1420] bg-linear-to-b from-[#d9e8fb] via-[#b9d5f8] to-[#d3e6fd] text-[#15428b]">
    <span className="flex w-10 items-center border-r border-[#8db2e3] pl-[7px] text-[11px]">Listo</span>
    <div className="ml-auto flex items-center border-l border-[#8db2e3] bg-linear-to-b from-[#b5cff2] via-[#8fb4e4] to-[#a9c8f0] pl-[6px]">
      <div className="flex h-[18px] w-[56px] divide-x divide-[#8db2e3] rounded-sm border border-[#6d8fc0] bg-[#c3d8f3]">
        <button aria-label="Normal" className="flex flex-1 items-center justify-center bg-linear-to-b from-[#fbdc9c] to-[#ffe79b]">
          <svg width="13" height="11" viewBox="0 0 13 11" aria-hidden="true">
            <path d="M.5.500h12v10H.5zM4.500.500v10M8.500.500v10M.5 4h12M.5 7h12" fill="#fff" stroke="#6a5a3c" />
          </svg>
        </button>
        <button aria-label="Diseño de página" className="flex flex-1 items-center justify-center">
          <svg width="13" height="12" viewBox="0 0 13 12" aria-hidden="true">
            <path d="M.5.500h12v11H.5z" fill="#8e9bb0" stroke="#4c5a70" />
            <path d="M3.500 2.500h6v7h-6z" fill="#fff" stroke="#4c5a70" />
            <path d="M5 5h3M5 7h3" stroke="#4c5a70" />
          </svg>
        </button>
        <button aria-label="Vista previa de salto de página" className="flex flex-1 items-center justify-center">
          <svg width="13" height="12" viewBox="0 0 13 12" aria-hidden="true">
            <path d="M.5.500h12v11H.5z" fill="#e9eff8" stroke="#4c5a70" />
            <path d="M4.500.500v7M8.500.500v7M.5 7.500h8" stroke="#4c5a70" fill="none" />
          </svg>
        </button>
      </div>
      <button className="w-10 text-center text-[11px]">73%</button>
      <button aria-label="Alejar" className="ml-1">
        <svg width="16" height="16" viewBox="0 0 16 16" aria-hidden="true">
          <circle cx="8" cy="8" r="7" fill="#e9f0fa" stroke="#5b759f" />
          <path d="M4 8h8" stroke="#3f5780" strokeWidth="2" />
        </svg>
      </button>
      <div className="relative flex w-[102px] items-center">
        <span className="h-px w-full bg-[#5b83b5]" />
        <span className="absolute left-1/2 h-[7px] w-px bg-[#e9f0fa]" />
        <input aria-label="Zoom" type="range" defaultValue={36} className="absolute inset-0 w-full opacity-0" />
        <svg width="9" height="13" viewBox="0 0 9 13" className="pointer-events-none absolute left-[33px]" aria-hidden="true">
          <path d="M.5.500h8v8l-4 4-4-4z" fill="#dbe6f5" stroke="#4a6796" />
          <path d="M4.500 2v6" stroke="#4a6796" />
        </svg>
      </div>
      <button aria-label="Acercar" className="mr-[5px]">
        <svg width="16" height="16" viewBox="0 0 16 16" aria-hidden="true">
          <circle cx="8" cy="8" r="7" fill="#e9f0fa" stroke="#5b759f" />
          <path d="M4 8h8M8 4v8" stroke="#3f5780" strokeWidth="2" />
        </svg>
      </button>
    </div>
  </footer>
);

export default function App() {
  return (
    <div className="relative flex h-screen flex-col overflow-hidden bg-[#bfdbff] font-['Open_Sans','Noto_Sans',sans-serif] text-[11px]">
      <TitleBar />
      <RibbonTabs />
      <button aria-label="Botón de Office" className="absolute top-[3px] left-[2px] z-20">
        <OfficeLogo />
      </button>
      <Ribbon />
      <FormulaBar />
      <main className="mt-[3px] flex min-h-0 flex-1 border-t border-[#5b83b5]">
        <Sheet />
        <VerticalScroll />
      </main>
      <SheetTabs />
      <StatusBar />
    </div>
  );
}
